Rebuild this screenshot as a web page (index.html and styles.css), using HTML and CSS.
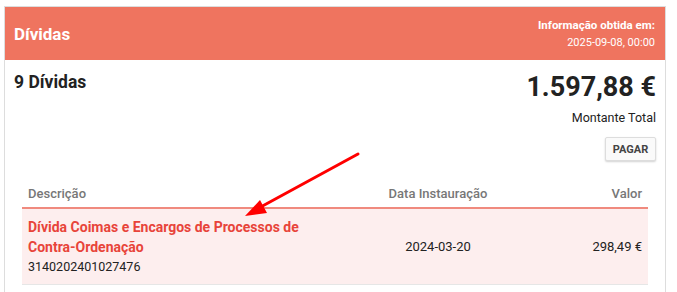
FILE: index.html
```html
<html>
<head>
<meta http-equiv="Content-Type" content="text/html; charset=UTF-8" />
<title>Dívidas</title>
<link rel="stylesheet" href="styles.css">
</head>
<body>

<div class="card">
  <div class="card-header">
    <h1>Dívidas</h1>
    <div class="obtida">
      <b>Informação obtida em:</b>
      <span>2025-09-08, 00:00</span>
    </div>
  </div>

  <div class="card-body">
    <div class="resumo">
      <h2>9 Dívidas</h2>
      <div class="total">
        <div class="montante">1.597,88 €</div>
        <div class="legenda">Montante Total</div>
        <button class="btn-pagar" type="button">PAGAR</button>
      </div>
    </div>

    <table class="lista">
      <thead>
        <tr>
          <th class="col-desc">Descrição</th>
          <th class="col-data">Data Instauração</th>
          <th class="col-valor">Valor</th>
        </tr>
      </thead>
      <tbody>
        <tr class="destaque">
          <td class="col-desc">
            <a href="#">Dívida Coimas e Encargos de Processos de Contra-Ordenação</a>
            <div class="ref">3140202401027476</div>
          </td>
          <td class="col-data">2024-03-20</td>
          <td class="col-valor">298,49 €</td>
        </tr>
      </tbody>
    </table>
  </div>

  <svg class="seta" width="140" height="80" viewBox="0 0 140 80">
    <line x1="125" y1="14" x2="24" y2="69" stroke="#f00" stroke-width="3" stroke-linecap="round"/>
    <polygon points="12,76 27,60 34,73" fill="#f00"/>
  </svg>
</div>

</body>
</html>
```

FILE: styles.css
```css
body {
	font-family: Roboto, "Liberation Sans", Arial, sans-serif;
	background: #FFF;
	margin: 0;
	padding: 6px 0 0 4px;
	color: #222;
	overflow: hidden;
}

h1, h2 {
	margin: 0;
}

.card {
	position: relative;
	width: 660px;
	height: 285px;
	border: 1px solid #DDD;
	border-bottom: none;
	background: #FFF;
}

.card-header {
	display: flex;
	justify-content: space-between;
	align-items: center;
	height: 53px;
	padding: 0 10px 0 9px;
	background: #EF745F;
	color: #FFF;
}

.card-header h1 {
	font-size: 17px;
	font-weight: 700;
}

.obtida {
	display: flex;
	flex-direction: column;
	align-items: flex-end;
	line-height: 18px;
}

.obtida b {
	font-size: 11.5px;
	font-weight: 700;
}

.obtida span {
	font-size: 11px;
}

.card-body {
	padding: 9px 17px 0 17px;
}

.resumo {
	display: flex;
	justify-content: space-between;
	margin: 0 -8px 0 -8px;
}

.resumo h2 {
	font-size: 17.5px;
	font-weight: 700;
	line-height: 24px;
	padding-top: 1px;
}

.total {
	display: flex;
	flex-direction: column;
	align-items: flex-end;
}

.montante {
	font-size: 27px;
	font-weight: 700;
	line-height: 36px;
}

.legenda {
	font-size: 12.5px;
	line-height: 18px;
	margin-top: 4px;
}

.btn-pagar {
	margin-top: 10px;
	width: 51px;
	height: 24px;
	padding: 0;
	font-family: inherit;
	font-size: 11px;
	font-weight: 700;
	color: #444;
	background: #FAFAFA;
	border: 1px solid #DDD;
	border-radius: 2px;
	box-shadow: 0 1px 2px rgba(0,0,0,0.18);
}

.lista {
	width: 100%;
	margin-top: 16px;
	border-collapse: collapse;
	font-size: 13px;
}

.lista th {
	color: #777;
	font-weight: 500;
	padding: 8px 6px 5px 6px;
	line-height: 17px;
	border-bottom: 2px solid #F08A7E;
}

.lista td {
	padding: 8px 6px 7px 6px;
	line-height: 20px;
	border-bottom: 1px solid #E6E6E6;
}

.col-desc {
	text-align: left;
	width: 296px;
}

.col-data {
	text-align: center;
}

.col-valor {
	text-align: right;
	width: 90px;
}

tr.destaque {
	background: #FDEEEE;
}

tr.destaque a {
	color: #E8443A;
	font-size: 14px;
	font-weight: 700;
	text-decoration: none;
	display: block;
}

.ref {
	font-size: 12.5px;
}

.seta {
	position: absolute;
	left: 228px;
	top: 133px;
}
```
